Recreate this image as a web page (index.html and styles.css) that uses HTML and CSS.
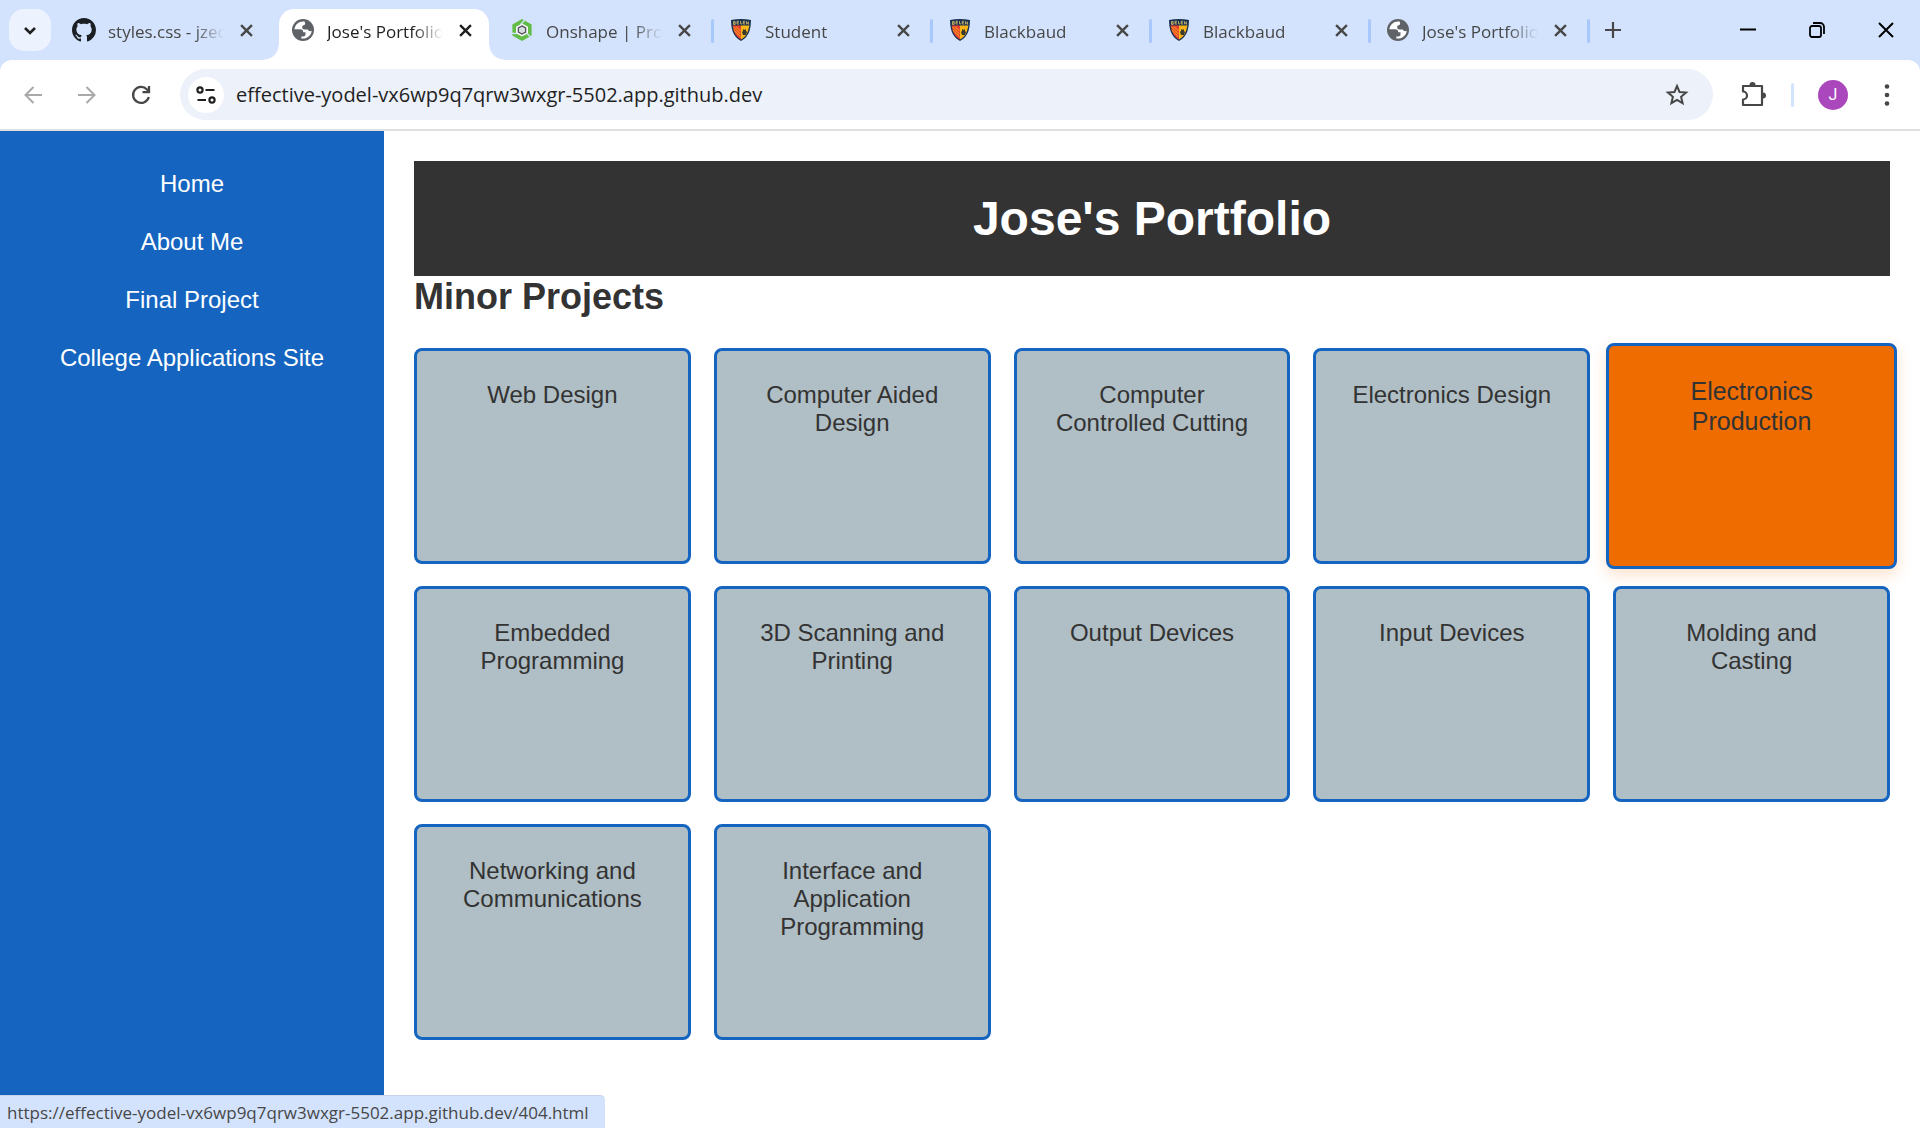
FILE: index.html
```html
<!DOCTYPE html>
<html lang="en">
<head>
<meta charset="utf-8">
<title>Jose's Portfolio</title>
<link rel="stylesheet" href="styles.css">
</head>
<body>
<svg class="symbols" aria-hidden="true">
  <symbol id="close" viewBox="0 0 12 12"><path d="M1 1l10 10M11 1L1 11" fill="none" stroke="currentColor" stroke-width="2.2"/></symbol>
  <symbol id="globe" viewBox="0 0 22 22">
    <circle cx="11" cy="11" r="11" fill="#5f6368"/>
    <path d="M12.500 2.600C7.500 1.800 3 5.300 2.400 10.300h5.800c2 0 3 1.200 3 2.900h2.300v2.200c0 1.300-1 2-2.500 2H9.300v2c5 1 9.900-2.400 10.400-7.600-1.700.8-3.200.2-3.900-1.200h-3.300c-1.600 0-2.300-1-2.300-2.300 0-1.500 1-2.200 2.300-2.200.8-.7.900-2 0-3.500z" fill="#fff"/>
  </symbol>
  <symbol id="shield" viewBox="0 0 20 22">
    <path d="M0 1Q10-1 20 1Q20 7 18.500 12Q16 19 10 22Q4 19 1.500 12Q0 7 0 1z" fill="#17304f"/>
    <path d="M1.500 6.500H10V20.500Q5 18 3 12z" fill="#e8412f"/>
    <path d="M10 6.500H18.500L17 12Q15 18 10 20.500z" fill="#fbb615"/>
    <path d="M2.500 8l7 7M2.700 11l6.800 6.800M5 7.500l4.500 4.500" stroke="#fbb615"/>
    <path d="M12 10l1.500 1 1.500-1v2l1 1-1 3h-3l-1-3 1-1z" fill="#3b3a2c"/>
    <path d="M2.500 2.500v3h1.700v-3zM2.500 4h1.700M8 2.200H6v2.800h2M6 3.600h1.700M9.500 2v2.900h1.700M14.200 5h-2V2.200h2M12.200 3.600h1.700M15.500 5.400V2.500l1.900 2.900V2.500" fill="none" stroke="#d9bd6a" stroke-width=".8"/>
  </symbol>
</svg>

<header class="browser">
  <div class="tab-strip">
    <button class="tab-search" aria-label="Search tabs"><svg width="14" height="9" viewBox="0 0 14 9"><path d="M2 2l5 5 5-5" fill="none" stroke="#1f1f1f" stroke-width="2.600"/></svg></button>
    <div class="tabs">
      <div class="tab no-divider">
        <svg class="favicon" viewBox="0 0 16 16"><path fill="#1b1f23" d="M8 0C3.580 0 0 3.580 0 8c0 3.540 2.290 6.530 5.470 7.590.4.070.55-.17.55-.38 0-.19-.01-.82-.01-1.490-2.010.37-2.530-.49-2.690-.94-.09-.23-.48-.94-.82-1.130-.28-.15-.68-.52-.01-.53.63-.01 1.080.58 1.230.82.72 1.210 1.870.87 2.330.66.070-.52.280-.87.510-1.070-1.780-.2-3.640-.89-3.640-3.950 0-.87.310-1.590.82-2.150-.08-.2-.36-1.020.08-2.120 0 0 .67-.21 2.200.82.640-.18 1.320-.27 2-.27s1.360.09 2 .27c1.530-1.040 2.200-.82 2.200-.82.440 1.100.16 1.920.08 2.120.51.560.82 1.270.82 2.150 0 3.070-1.870 3.750-3.650 3.950.29.250.54.730.54 1.480 0 1.070-.01 1.930-.01 2.200 0 .21.150.46.550.38A8.010 8.010 0 0 0 16 8c0-4.420-3.580-8-8-8z"/></svg>
        <span class="tab-title">styles.css - jzec</span>
        <button class="tab-close" aria-label="Close tab"><svg><use href="#close"/></svg></button>
      </div>
      <div class="tab active no-divider">
        <svg class="favicon"><use href="#globe"/></svg>
        <span class="tab-title">Jose's Portfolio</span>
        <button class="tab-close" aria-label="Close tab"><svg><use href="#close"/></svg></button>
      </div>
      <div class="tab">
        <svg class="favicon" viewBox="0 0 22 24"><path d="M11 0L21.500 6v12L11 24 .5 18V6z" fill="#62bd46"/><path d="M11 5L17.500 8.500v7L11 19 4.500 15.500v-7z" fill="#fff"/><path d="M14 1l-4.500 5M0 15.500l6 .5M20 19l-4.500-4" stroke="#d3e3fd" stroke-width="1.500"/><path d="M11 7.500L15 9.700v4.600L11 16.500l-4-2.200V9.700z" fill="#d8dde2" stroke="#4c5257" stroke-width="1.400"/></svg>
        <span class="tab-title">Onshape | Pro</span>
        <button class="tab-close" aria-label="Close tab"><svg><use href="#close"/></svg></button>
      </div>
      <div class="tab">
        <svg class="favicon"><use href="#shield"/></svg>
        <span class="tab-title">Student</span>
        <button class="tab-close" aria-label="Close tab"><svg><use href="#close"/></svg></button>
      </div>
      <div class="tab">
        <svg class="favicon"><use href="#shield"/></svg>
        <span class="tab-title">Blackbaud</span>
        <button class="tab-close" aria-label="Close tab"><svg><use href="#close"/></svg></button>
      </div>
      <div class="tab">
        <svg class="favicon"><use href="#shield"/></svg>
        <span class="tab-title">Blackbaud</span>
        <button class="tab-close" aria-label="Close tab"><svg><use href="#close"/></svg></button>
      </div>
      <div class="tab">
        <svg class="favicon"><use href="#globe"/></svg>
        <span class="tab-title">Jose's Portfolio</span>
        <button class="tab-close" aria-label="Close tab"><svg><use href="#close"/></svg></button>
      </div>
    </div>
    <button class="new-tab" aria-label="New tab"><svg width="16" height="16" viewBox="0 0 16 16"><path d="M8 0v16M0 8h16" stroke="#474747" stroke-width="2.200"/></svg></button>
    <div class="window-buttons">
      <button aria-label="Minimize"><svg width="16" height="16" viewBox="0 0 16 16"><path d="M0 7.500h16" stroke="#000" stroke-width="2"/></svg></button>
      <button aria-label="Restore"><svg width="16" height="16" viewBox="0 0 16 16"><g fill="none" stroke="#000" stroke-width="1.800"><rect x="1" y="4" width="11" height="11" rx="2"/><path d="M4 1h7a4 4 0 0 1 4 4v7"/></g></svg></button>
      <button aria-label="Close"><svg width="16" height="16" viewBox="0 0 16 16"><path d="M1 1l14 14M15 1L1 15" stroke="#000" stroke-width="2"/></svg></button>
    </div>
  </div>
  <div class="toolbar">
    <div class="nav-buttons">
      <button aria-label="Back"><svg width="18" height="18" viewBox="0 0 18 18"><path d="M18 9H2M9.500 1L1.500 9l8 8" fill="none" stroke="#a9a9a9" stroke-width="2"/></svg></button>
      <button aria-label="Forward"><svg width="18" height="18" viewBox="0 0 18 18"><path d="M0 9h16M8.500 1l8 8-8 8" fill="none" stroke="#a9a9a9" stroke-width="2"/></svg></button>
      <button aria-label="Reload"><svg width="20" height="20" viewBox="0 0 20 20"><path d="M17.800 12A8 8 0 1 1 16 4.500L17.500 6M18 1v6.200h-6.500" fill="none" stroke="#474747" stroke-width="2.300"/></svg></button>
    </div>
    <div class="address">
      <button class="site-info" aria-label="Site information"><svg width="20" height="18" viewBox="0 0 20 18"><g fill="none" stroke="#1f1f1f" stroke-width="2.200"><circle cx="4" cy="4" r="2.600"/><circle cx="16" cy="14" r="2.600"/><path d="M9.500 4H18.500M1.500 14h8.500"/></g></svg></button>
      <input class="url" type="text" aria-label="Address" value="effective-yodel-vx6wp9q7qrw3wxgr-5502.app.github.dev">
      <button class="bookmark" aria-label="Bookmark"><svg width="24" height="24" viewBox="0 0 24 24"><path d="M12 3l2.500 6 6.600.5-5 4.300 1.500 6.400L12 16.800l-5.600 3.400 1.500-6.400-5-4.300L9.500 9z" fill="none" stroke="#474747" stroke-width="2"/></svg></button>
    </div>
    <div class="tools">
      <button aria-label="Extensions"><svg width="26" height="26" viewBox="0 0 26 26"><path d="M2 4h19v19H2v-5.500a4 4 0 0 0 0-8z" fill="none" stroke="#474747" stroke-width="2.200" stroke-linejoin="round"/><path d="M8.500 3a3 3 0 0 1 6 0zM22 10.500a3 3 0 0 1 0 6z" fill="#474747"/></svg></button>
      <span class="tool-divider"></span>
      <button class="avatar" aria-label="Profile">J</button>
      <button aria-label="Menu"><svg width="6" height="22" viewBox="0 0 6 22"><g fill="#474747"><circle cx="3" cy="2.500" r="2.300"/><circle cx="3" cy="11" r="2.300"/><circle cx="3" cy="19.500" r="2.300"/></g></svg></button>
    </div>
  </div>
</header>

<div class="page">
  <nav class="sidebar">
    <a href="#home">Home</a>
    <a href="#about">About Me</a>
    <a href="#final">Final Project</a>
    <a href="#college">College Applications Site</a>
  </nav>
  <main class="content">
    <h1>Jose's Portfolio</h1>
    <h2>Minor Projects</h2>
    <div class="projects">
      <a class="project" href="#web">Web Design</a>
      <a class="project" href="#cad">Computer Aided Design</a>
      <a class="project" href="#cutting">Computer Controlled Cutting</a>
      <a class="project" href="#electronics">Electronics Design</a>
      <a class="project highlighted" href="#production">Electronics Production</a>
      <a class="project" href="#embedded">Embedded Programming</a>
      <a class="project" href="#scanning">3D Scanning and Printing</a>
      <a class="project" href="#output">Output Devices</a>
      <a class="project" href="#input">Input Devices</a>
      <a class="project" href="#molding">Molding and Casting</a>
      <a class="project" href="#networking">Networking and Communications</a>
      <a class="project" href="#interface">Interface and Application Programming</a>
    </div>
  </main>
</div>
<div class="link-status">https://effective-yodel-vx6wp9q7qrw3wxgr-5502.app.github.dev/404.html</div>
</body>
</html>
```
FILE: styles.css
```css
* { box-sizing: border-box; }

body {
  margin: 0;
  min-height: 100vh;
  display: flex;
  flex-direction: column;
  background: #fff;
  color: #333;
  font-family: Arial, "Liberation Sans", sans-serif;
  font-size: 24px;
  line-height: 28px;
}

button {
  display: flex;
  align-items: center;
  justify-content: center;
  flex: none;
  padding: 0;
  border: 0;
  background: none;
}

a { color: inherit; text-decoration: none; }

.symbols { display: none; }

/* Browser frame */
.browser {
  background: #d3e3fd;
  font-family: "Segoe UI", "Open Sans", sans-serif;
}

.tab-strip {
  display: flex;
  align-items: center;
  height: 60px;
}

.tab-search {
  width: 42px;
  height: 42px;
  margin: 0 4px 0 9px;
  border-radius: 15px;
  background: #ecf2fe;
}

.tabs {
  display: flex;
  flex: 0 1 1533px;
  min-width: 0;
  align-self: stretch;
}

.tab {
  position: relative;
  display: flex;
  flex: 1;
  min-width: 0;
  align-items: center;
  padding: 0 16px 0 17px;
  color: #474747;
  font-size: 17px;
}

.tab:not(.no-divider)::after {
  content: "";
  position: absolute;
  right: -2px;
  top: 19px;
  width: 3px;
  height: 24px;
  border-radius: 2px;
  background: #a8c7fa;
}

.tab.active {
  margin: 9px 4px 0 5px;
  padding: 0 12px 9px 12px;
  border-radius: 15px 15px 0 0;
  background: #fff;
  color: #1f1f1f;
}

.tab.active::before,
.tab.active::after {
  content: "";
  position: absolute;
  bottom: 0;
  width: 15px;
  height: 15px;
}

.tab.active::before {
  left: -15px;
  background: radial-gradient(circle at 0 0, #d3e3fd 14px, #fff 15px);
}

.tab.active::after {
  right: -15px;
  background: radial-gradient(circle at 100% 0, #d3e3fd 14px, #fff 15px);
}

.favicon {
  flex: none;
  width: 24px;
  height: 24px;
  padding: 1px;
}

.tab:first-child .favicon { padding: 0; }

.tab-title {
  flex: 1;
  min-width: 0;
  margin: 3px 10px 0 12px;
  overflow: hidden;
  white-space: nowrap;
  mask-image: linear-gradient(to right, #000 calc(100% - 30px), transparent);
}

.tab-close { width: 24px; height: 24px; color: inherit; }
.tab-close svg { width: 13px; height: 13px; }

.new-tab { width: 42px; height: 42px; margin-left: 4px; }

.window-buttons { display: flex; margin-left: auto; }
.window-buttons button { width: 69px; height: 60px; }

.toolbar {
  display: flex;
  align-items: center;
  height: 71px;
  padding-right: 12px;
  border-bottom: 2px solid #dfdfdf;
  border-radius: 12px 12px 0 0;
  background: #fff;
}

.nav-buttons { display: flex; padding: 0 12px 0 6px; }
.nav-buttons button { width: 54px; height: 42px; }

.address {
  display: flex;
  flex: 1;
  align-items: center;
  height: 51px;
  padding: 0 24px 0 8px;
  border-radius: 26px;
  background: #ecf1fa;
}

.site-info {
  width: 36px;
  height: 36px;
  border-radius: 50%;
  background: #fff;
}

.url {
  flex: 1;
  min-width: 0;
  padding: 0;
  margin: 0 12px;
  border: 0;
  outline: 0;
  background: none;
  color: #1f1f1f;
  font: 20px/28px "Segoe UI", "Open Sans", sans-serif;
}

.tools { display: flex; align-items: center; padding-left: 28px; }

.tool-divider {
  width: 3px;
  height: 24px;
  margin: 0 24px;
  border-radius: 2px;
  background: #d3e3fd;
}

.avatar {
  width: 30px;
  height: 30px;
  margin-right: 36px;
  border-radius: 50%;
  background: #ab47bc;
  color: #fff;
  font: 16px/30px Roboto, sans-serif;
}

.tools button:last-child { width: 6px; margin-right: 18px; }

/* Portfolio page */
.page { display: flex; flex: 1; }

.sidebar {
  width: 20%;
  padding: 24px 22px;
  background: #1565c0;
  color: #fff;
  text-align: center;
}

.sidebar a { display: block; padding: 15px 0; }

.content { flex: 1; min-width: 0; padding: 30px; }

h1 {
  margin: 0;
  padding: 30px;
  background: #333;
  color: #fff;
  font-size: 48px;
  line-height: 55px;
  text-align: center;
}

h2 { margin: 0 0 30px; font-size: 36px; line-height: 42px; }

.projects {
  display: grid;
  grid-template-columns: repeat(5, 1fr);
  grid-auto-rows: 216px;
  gap: 22px 23px;
}

.project {
  padding: 30px;
  border: 3px solid #1565c0;
  border-radius: 8px;
  background: #b0bec5;
  text-align: center;
}

.project.highlighted {
  margin: -5px -7px;
  background: #ef6c00;
  box-shadow: 0 6px 16px rgba(239, 108, 0, 0.2);
  font-size: 25px;
  line-height: 30px;
}

.link-status {
  position: fixed;
  left: 0;
  bottom: 0;
  height: 33px;
  padding: 0 16px 0 7px;
  border-top: 1px solid #c6d3ea;
  border-radius: 0 5px 0 0;
  background: #d3e3fd;
  color: #474747;
  font: 17px/34px "Segoe UI", "Open Sans", sans-serif;
}
```
